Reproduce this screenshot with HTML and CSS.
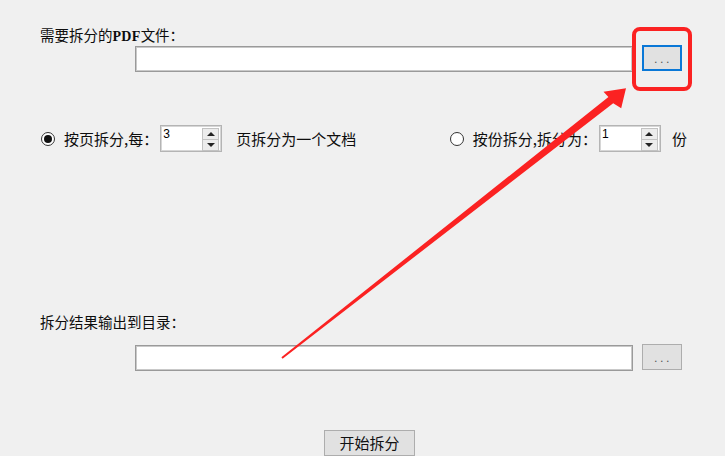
FILE: index.html
```
<!DOCTYPE html>
<html lang="zh-CN">
<head>
<meta charset="utf-8">
<title>PDF拆分</title>
<link rel="stylesheet" href="styles.css">
</head>
<body>
<div class="page">
  <div class="label label-top">需要拆分的<span class="mono">PDF</span>文件：</div>
  <div class="file-row">
    <div class="text-input"></div>
    <div class="browse focused"><span class="dots">...</span></div>
  </div>

  <div class="mode-row">
    <div class="mode">
      <span class="radio checked"></span>
      <span class="mode-text">按页拆分,每：</span>
      <div class="spin">
        <span class="spin-value">3</span>
        <div class="spin-btns">
          <span class="spin-btn"><span class="tri-up"></span></span>
          <span class="spin-btn"><span class="tri-down"></span></span>
        </div>
      </div>
      <span class="after after-1">页拆分为一个文档</span>
    </div>
    <div class="mode mode-2">
      <span class="radio"></span>
      <span class="mode-text">按份拆分,拆分为：</span>
      <div class="spin">
        <span class="spin-value">1</span>
        <div class="spin-btns">
          <span class="spin-btn"><span class="tri-up"></span></span>
          <span class="spin-btn"><span class="tri-down"></span></span>
        </div>
      </div>
      <span class="after after-2">份</span>
    </div>
  </div>

  <div class="label label-out">拆分结果输出到目录：</div>
  <div class="file-row file-row-2">
    <div class="text-input"></div>
    <div class="browse"><span class="dots">...</span></div>
  </div>

  <div class="start-row">
    <div class="start-btn">开始拆分</div>
  </div>

  <svg class="annot" width="725" height="458" viewBox="0 0 725 458">
    <rect x="634" y="29" width="56" height="60" rx="6" ry="6" fill="none" stroke="#fb2222" stroke-width="4"/>
    <polygon fill="#fb2222" points="281.4,357.2 608.4,97.0 603.5,91.8 626,88.2 621.2,108.3 613.2,103.2 282.6,358.8"/>
  </svg>
</div>
<div class="bottom-strip"></div>
</body>
</html>
```
FILE: styles.css
```
html, body {
  margin: 0;
  padding: 0;
}
body {
  width: 725px;
  height: 458px;
  overflow: hidden;
  background: #ffffff;
  font-family: "Noto Sans CJK SC", "Noto Sans", sans-serif;
  color: #0d0d0d;
}
.page {
  position: relative;
  width: 725px;
  height: 456px;
  background: #f0f0f0;
  overflow: hidden;
  display: flex;
  flex-direction: column;
}
.bottom-strip {
  height: 2px;
  background: #ffffff;
}
.label {
  font-size: 14.5px;
  line-height: 16px;
  height: 16px;
  padding-left: 40px;
  white-space: nowrap;
}
.label-top {
  margin-top: 27px;
}
.mono {
  font-family: "Liberation Serif", serif;
  font-size: 14px;
  font-weight: bold;
  letter-spacing: 0.3px;
}
.file-row {
  display: flex;
  align-items: flex-start;
  padding-left: 135px;
  margin-top: 2px;
  gap: 9px;
}
.text-input {
  width: 496px;
  height: 24px;
  margin-top: 1px;
  background: #fff;
  border: 1px solid #9a9a9a;
  box-shadow: inset 0 0 0 1px #c9c9c9;
}
.browse {
  box-sizing: border-box;
  width: 40px;
  height: 26px;
  background: #e1e1e1;
  border: 1px solid #adadad;
  display: flex;
  align-items: center;
  justify-content: center;
}
.browse.focused {
  border: 2px solid #0a78d7;
}
.dots {
  font-family: "DejaVu Sans", sans-serif;
  font-size: 11px;
  letter-spacing: 2.5px;
  color: #555;
  margin-top: 3px;
  padding-left: 2px;
}
.mode-row {
  display: flex;
  align-items: center;
  margin-top: 53px;
  padding-left: 41px;
  padding-right: 38px;
  height: 27px;
  font-size: 15px;
}
.mode {
  display: flex;
  align-items: center;
  height: 27px;
}
.mode-2 {
  margin-left: auto;
}
.radio {
  box-sizing: border-box;
  width: 14px;
  height: 14px;
  border: 1px solid #333;
  border-radius: 50%;
  background: #fff;
  display: flex;
  align-items: center;
  justify-content: center;
  margin-right: 9px;
}
.radio.checked::after {
  content: "";
  width: 8px;
  height: 8px;
  border-radius: 50%;
  background: #111;
}
.mode-text {
  white-space: nowrap;
  margin-right: 2px;
}
.spin {
  box-sizing: border-box;
  width: 62px;
  height: 27px;
  background: #fff;
  border: 1px solid #b4b4b4;
  box-shadow: inset 0 0 0 1px #d6d6d6;
  display: flex;
  align-items: flex-start;
  justify-content: space-between;
  padding: 1px 2px 1px 2px;
}
.spin-value {
  font-family: "Liberation Sans", sans-serif;
  font-size: 12px;
  line-height: 12px;
  margin-top: 1px;
  color: #000;
}
.spin-btns {
  display: flex;
  flex-direction: column;
  width: 17px;
  height: 23px;
  margin-top: 1px;
}
.spin-btn {
  flex: 1;
  background: #ececec;
  border: 1px solid #c2c2c2;
  display: flex;
  align-items: center;
  justify-content: center;
}
.spin-btn + .spin-btn {
  border-top: 0;
}
.tri-up {
  width: 0;
  height: 0;
  border-left: 4px solid transparent;
  border-right: 4px solid transparent;
  border-bottom: 4px solid #222;
}
.tri-down {
  width: 0;
  height: 0;
  border-left: 4px solid transparent;
  border-right: 4px solid transparent;
  border-top: 4px solid #222;
}
.after {
  white-space: nowrap;
}
.after-1 {
  margin-left: 14px;
}
.after-2 {
  margin-left: 11px;
}
.label-out {
  margin-top: 162px;
}
.file-row-2 {
  margin-top: 14px;
}
.start-row {
  display: flex;
  padding-left: 324px;
  margin-top: 59px;
}
.start-btn {
  box-sizing: border-box;
  width: 91px;
  height: 26px;
  background: #e1e1e1;
  border: 1px solid #adadad;
  font-size: 15px;
  line-height: 24px;
  text-align: center;
  color: #111;
}
.annot {
  position: absolute;
  left: 0;
  top: 0;
  pointer-events: none;
}
```
